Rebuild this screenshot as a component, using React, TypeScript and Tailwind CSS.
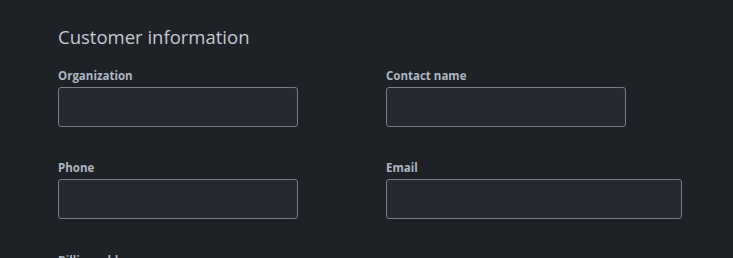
import React from "react";

const labelCls = "text-[11.5px] leading-4 font-bold text-[#aeb6c1] mb-[3px]";
const inputCls = "h-10 rounded-[3px] border border-[#767d88] bg-[#252a31]";

export default function App() {
  return (
    <div
      className="w-[733px] h-[258px] overflow-hidden bg-[#1e2126] pl-[58px] pt-[23px]"
      style={{ fontFamily: '"Open Sans", "Noto Sans", sans-serif' }}
    >
      <h2 className="text-[18.5px] leading-7 font-normal text-[#c3c9d1] mb-[17px]">Customer information</h2>
      <div className="grid grid-cols-[328px_auto] gap-y-[33px]">
        <div className="flex flex-col">
          <label className={labelCls}>Organization</label>
          <div className={`w-[240px] ${inputCls}`} />
        </div>
        <div className="flex flex-col">
          <label className={labelCls}>Contact name</label>
          <div className={`w-[240px] ${inputCls}`} />
        </div>
        <div className="flex flex-col">
          <label className={labelCls}>Phone</label>
          <div className={`w-[240px] ${inputCls}`} />
        </div>
        <div className="flex flex-col">
          <label className={labelCls}>Email</label>
          <div className={`w-[296px] ${inputCls}`} />
        </div>
        <div className="flex flex-col pt-px">
          <label className={labelCls}>Billing address</label>
        </div>
      </div>
    </div>
  );
}
